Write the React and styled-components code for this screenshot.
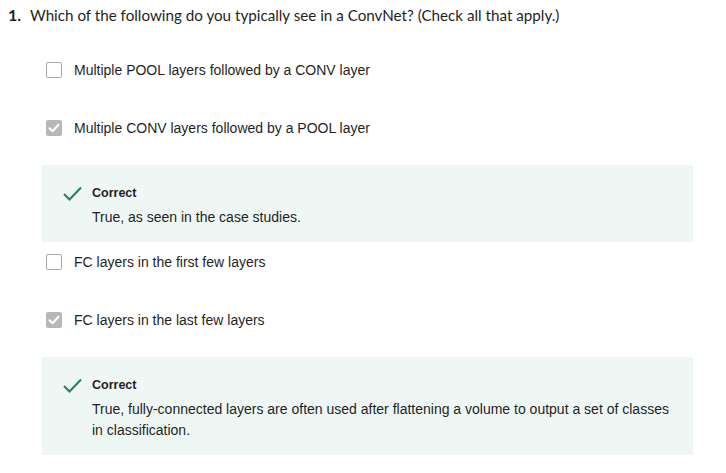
import styled, { createGlobalStyle } from 'styled-components'

const GlobalStyle = createGlobalStyle`
  body {
    margin: 0;
    background: #ffffff;
  }
`

const Page = styled.div`
  padding: 3px 0 0 8px;
  width: 726px;
  box-sizing: border-box;
`

const Question = styled.div`
  display: flex;
  font-family: "Lato", "Noto Sans", sans-serif;
  font-size: 15.2px;
  line-height: 24px;
  color: #1f1f1f;
`

const Number = styled.span`
  font-weight: 700;
  font-size: 16px;
  width: 22px;
  flex-shrink: 0;
`

const List = styled.div`
  margin: 23px 0 0 34px;
  width: 651px;
  display: flex;
  flex-direction: column;
`

const Item = styled.div`
  margin-bottom: ${p => (p.$hasFeedback ? 0 : 18)}px;
`

const Option = styled.label`
  display: flex;
  align-items: center;
  height: 40px;
  padding-left: 4px;
  font-family: "Liberation Sans", Arial, sans-serif;
  font-size: 14px;
  color: #1f1f1f;
`

const Box = styled.span`
  width: 16px;
  height: 16px;
  box-sizing: border-box;
  border-radius: 2px;
  margin-right: 12px;
  display: flex;
  align-items: center;
  justify-content: center;
  border: ${p => (p.$checked ? 'none' : '1.5px solid #a8a8a8')};
  background: ${p => (p.$checked ? '#b7b7b7' : '#ffffff')};
`

const Feedback = styled.div`
  margin-top: 17px;
  background: #eff7f5;
  padding: 19px 20px 14px 21px;
  font-family: "Liberation Sans", Arial, sans-serif;
`

const FeedbackHead = styled.div`
  display: flex;
  align-items: center;
  height: 18px;
  font-size: 12.5px;
  font-weight: 700;
  color: #1f1f1f;
`

const CheckIcon = styled.svg`
  width: 19px;
  height: 15px;
  margin-right: 10px;
`

const FeedbackText = styled.div`
  margin-top: 5px;
  padding-left: 29px;
  font-size: 14px;
  line-height: 21px;
  color: #1f1f1f;
`

const options = [
  { text: 'Multiple POOL layers followed by a CONV layer', checked: false },
  {
    text: 'Multiple CONV layers followed by a POOL layer',
    checked: true,
    feedback: 'True, as seen in the case studies.',
  },
  { text: 'FC layers in the first few layers', checked: false },
  {
    text: 'FC layers in the last few layers',
    checked: true,
    feedback:
      'True, fully-connected layers are often used after flattening a volume to output a set of classes in classification.',
  },
]

export default function App() {
  return (
    <Page>
      <GlobalStyle />
      <Question>
        <Number>1.</Number>
        <span>Which of the following do you typically see in a ConvNet? (Check all that apply.)</span>
      </Question>
      <List>
        {options.map((o, i) => (
          <Item key={i} $hasFeedback={!!o.feedback}>
            <Option>
              <Box $checked={o.checked}>
                {o.checked && (
                  <svg width="12" height="10" viewBox="0 0 12 10">
                    <path d="M1.5 5.2 L4.6 8.2 L10.5 1.8" fill="none" stroke="#fff" strokeWidth="2" strokeLinecap="round" strokeLinejoin="round" />
                  </svg>
                )}
              </Box>
              {o.text}
            </Option>
            {o.feedback && (
              <Feedback>
                <FeedbackHead>
                  <CheckIcon viewBox="0 0 19 15">
                    <path d="M1 8 L6.5 13.5 L18 1.5" fill="none" stroke="#1f8354" strokeWidth="2" />
                  </CheckIcon>
                  Correct
                </FeedbackHead>
                <FeedbackText>{o.feedback}</FeedbackText>
              </Feedback>
            )}
          </Item>
        ))}
      </List>
    </Page>
  )
}
